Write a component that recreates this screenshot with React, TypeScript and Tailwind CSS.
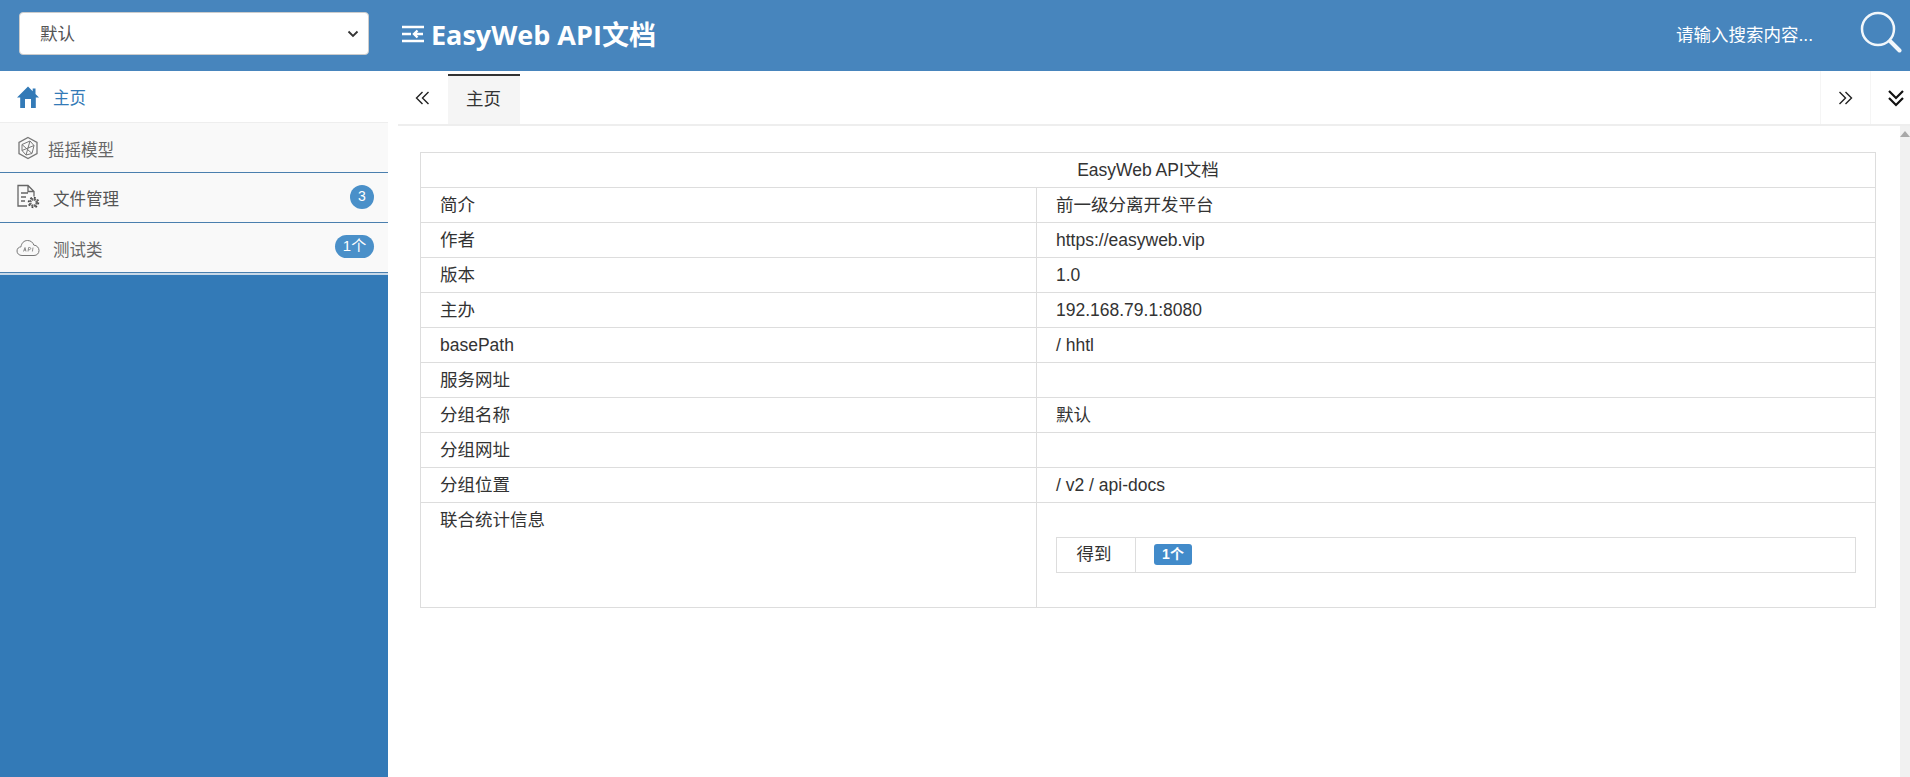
const font = "[font-family:'Liberation_Sans','Noto_Sans_CJK_SC',sans-serif]";

function Home() {
  return (
    <svg width="24" height="24" viewBox="0 0 24 24" fill="#337ab7">
      <path d="M12 1.500 1 12.500h3.200V23h15.600V12.500H23L19.500 9V3.500h-2.800v2.700L12 1.500Zm-3 12.500h6v9H9v-9Z" fillRule="evenodd" />
    </svg>
  );
}

function Model() {
  return (
    <svg width="22" height="24" viewBox="0 0 22 24" fill="none" stroke="#777" strokeWidth="1.300">
      <path d="M11 1.500 20 6.500v11L11 22.500 2 17.500v-11L11 1.500Z" />
      <path d="M5 8.500 13 5l4 4.500-2 8-6 1.500L5 14.500V8.500ZM5 8.500 15 17.500M13 5 9 19M5 14.500 17 9.500" strokeWidth="1" />
    </svg>
  );
}

function FileGear() {
  return (
    <svg width="24" height="26" viewBox="0 0 24 26" fill="none" stroke="#666" strokeWidth="1.300">
      <path d="M11 22H2V1.500h10l6 6v5M12 1.500v6h6M5 9h7M5 13h5M5 17h4" />
      <circle cx="17.500" cy="18.500" r="3.300" strokeWidth="2.400" strokeDasharray="2 0.600" />
      <circle cx="17.500" cy="18.500" r="5" stroke="#444" strokeWidth="1.500" strokeDasharray="1.800 2.100" />
    </svg>
  );
}

function CloudApi() {
  return (
    <svg width="24" height="18" viewBox="0 0 24 18" fill="none" stroke="#777" strokeWidth="1">
      <path d="M6 16.500C3 16.500 1 14.500 1 12c0-2.500 1.800-4 4-4.200C5.500 4 8 1.500 11.500 1.500c3.300 0 5.500 2 6.300 4.600 3.200.2 5.200 2.700 5.200 5.400 0 2.800-2 5-5 5H6Z" />
      <path d="M7.500 12.500 9 8.500l1 4M8 11h1.800M12 12.500l.6-4h1.200c1.400 0 1.200 2.200-.4 2.200h-1M17 8.500l-.6 4" strokeWidth=".8" />
    </svg>
  );
}

function Row({ label, value }: { label: string; value?: string }) {
  return (
    <tr className="h-[35px]">
      <td className="border border-[#ddd] px-[19px] py-0 align-middle">{label}</td>
      <td className="border border-[#ddd] px-[19px] py-0 align-middle">{value}</td>
    </tr>
  );
}

export default function App() {
  const rows: [string, string?][] = [
    ["简介", "前一级分离开发平台"],
    ["作者", "https://easyweb.vip"],
    ["版本", "1.0"],
    ["主办", "192.168.79.1:8080"],
    ["basePath", "/ hhtl"],
    ["服务网址"],
    ["分组名称", "默认"],
    ["分组网址"],
    ["分组位置", "/ v2 / api-docs"],
  ];
  return (
    <div className={`${font} w-[1910px] h-[777px] overflow-hidden flex flex-col bg-white text-[#333] text-[17.500px]`}>
      <header className="h-[71px] shrink-0 bg-[#4785bd] flex items-center text-white">
        <div className="w-[388px] shrink-0 pl-[19px]">
          <div className="w-[350px] h-[43px] bg-white rounded-[4px] border border-[#ccc] flex items-center justify-between pl-[20px] pr-[9px] text-[#555] mt-[-4px]">
            <span className="mt-[2px]">默认</span>
            <svg width="12" height="12" viewBox="0 0 12 12" fill="none" stroke="#333" strokeWidth="1.800">
              <path d="M1.500 3.500 6 8l4.500-4.500" />
            </svg>
          </div>
        </div>
        <div className="ml-[14px] flex items-center gap-[8px] flex-1 mt-[-3px]">
          <svg width="22" height="20" viewBox="0 0 22 20" fill="none" stroke="#fff" strokeWidth="2.400">
            <path d="M0 3h22M0 17h22M0 10h9M21 10h-8M15.500 6.500 12 10l3.500 3.500" />
          </svg>
          <span className="text-[27px] font-bold leading-none ml-[-1px] [font-family:'Open_Sans','Noto_Sans_CJK_SC',sans-serif]">EasyWeb API文档</span>
        </div>
        <span className="mr-[47px] mt-[-1px]">请输入搜索内容...</span>
        <svg className="mr-[8px] mt-[-7px]" width="42" height="42" viewBox="0 0 42 42" fill="none" stroke="#f2f7fb">
          <circle cx="18" cy="18" r="16" strokeWidth="2.500" />
          <path d="M30.500 30.500 39.500 39.500" strokeWidth="4" strokeLinecap="round" />
        </svg>
      </header>
      <div className="flex flex-1 min-h-0">
        <aside className="w-[388px] shrink-0 bg-[#337ab7] text-[16.500px]">
          <div className="h-[52px] bg-white border-b border-[#eee] flex items-center pl-[16px] gap-[13px] text-[#337ab7]">
            <Home />
            <span className="mt-[4px]">主页</span>
          </div>
          <div className="h-[50px] bg-[#f9f9f9] border-b border-[#4a7fae] flex items-center pl-[17px] gap-[9px] text-[#666]">
            <Model />
            <span className="mt-[5px]">摇摇模型</span>
          </div>
          <div className="h-[50px] bg-[#f9f9f9] border-b border-[#4a7fae] flex items-center pl-[16px] gap-[13px] text-[#555]">
            <div className="mt-[-2px]"><FileGear /></div>
            <span className="flex-1 mt-[3px]">文件管理</span>
            <span className="mr-[14px] mt-[-2px] w-[24px] h-[24px] rounded-full bg-[#4a90c9] text-white text-[14px] flex items-center justify-center">3</span>
          </div>
          <div className="h-[50px] bg-[#f9f9f9] border-b border-b-[#4a7fae] flex items-center pl-[16px] gap-[13px] text-[#666]">
            <CloudApi />
            <span className="flex-1 mt-[5px]">测试类</span>
            <span className="mr-[14px] mt-[-3px] w-[39px] h-[23px] rounded-full bg-[#4a90c9] text-white text-[15px] flex items-center justify-center">1个</span>
          </div>
          <div className="h-[2px] bg-[#c9d9e8]" />
        </aside>
        <main className="flex-1 min-w-0 flex flex-col">
          <div className="h-[55px] shrink-0 ml-[10px] border-b-2 border-[#eee] flex items-stretch">
            <div className="w-[50px] flex items-center justify-center text-[#222]">
              <svg width="16" height="16" viewBox="0 0 16 16" fill="none" stroke="#222" strokeWidth="1.400">
                <path d="M7.500 2 1.500 8l6 6M13.500 2l-6 6 6 6" />
              </svg>
            </div>
            <div className="w-[72px] mt-[3px] bg-[#f5f5f5] border-t-2 border-[#333] flex items-center justify-center text-[#333] pb-[2px] pr-[1px]">主页</div>
            <div className="flex-1" />
            <div className="w-[50px] border-l border-[#f5f5f5] flex items-center justify-center pr-[2px]">
              <svg width="16" height="16" viewBox="0 0 16 16" fill="none" stroke="#222" strokeWidth="1.400">
                <path d="M2.500 2l6 6-6 6M8.500 2l6 6-6 6" />
              </svg>
            </div>
            <div className="w-[40px] border-l border-[#f5f5f5] flex items-center justify-end pr-[5px]">
              <svg width="18" height="18" viewBox="0 0 18 18" fill="none" stroke="#111" strokeWidth="2.200">
                <path d="M2 2l7 7 7-7M2 9l7 7 7-7" />
              </svg>
            </div>
          </div>
          <div className="flex-1 min-h-0 flex">
            <div className="flex-1 min-w-0 pt-[26px] pl-[32px] pr-[24px]">
              <table className="w-full border-collapse border border-[#ddd] table-fixed">
                <colgroup>
                  <col className="w-[616px]" />
                  <col />
                </colgroup>
                <thead>
                  <tr className="h-[35px]">
                    <th colSpan={2} className="border border-[#ddd] font-normal text-center align-middle">EasyWeb API文档</th>
                  </tr>
                </thead>
                <tbody>
                  {rows.map(([l, v]) => (
                    <Row key={l} label={l} value={v} />
                  ))}
                  <tr className="h-[105px]">
                    <td className="border border-[#ddd] px-[19px] pt-[4px] align-top">联合统计信息</td>
                    <td className="border border-[#ddd] px-[19px] align-middle">
                      <table className="w-full border-collapse border border-[#ddd] mb-[1px]">
                        <tbody>
                          <tr className="h-[35px]">
                            <td className="border border-[#ddd] w-[79px] text-center pr-[4px] pb-[1px]">得到</td>
                            <td className="border border-[#ddd] pl-[18px] pb-[2px]">
                              <span className="inline-flex w-[38px] h-[21px] items-center justify-center rounded-[3px] bg-[#428bca] text-white text-[14px] font-bold align-middle">1个</span>
                            </td>
                          </tr>
                        </tbody>
                      </table>
                    </td>
                  </tr>
                </tbody>
              </table>
            </div>
            <div className="w-[10px] bg-[#f1f1f1] flex flex-col items-center pt-[5px] shrink-0">
              <div className="w-0 h-0 border-x-[5px] border-x-transparent border-b-[6px] border-b-[#a8a8a8]" />
            </div>
          </div>
        </main>
      </div>
    </div>
  );
}
